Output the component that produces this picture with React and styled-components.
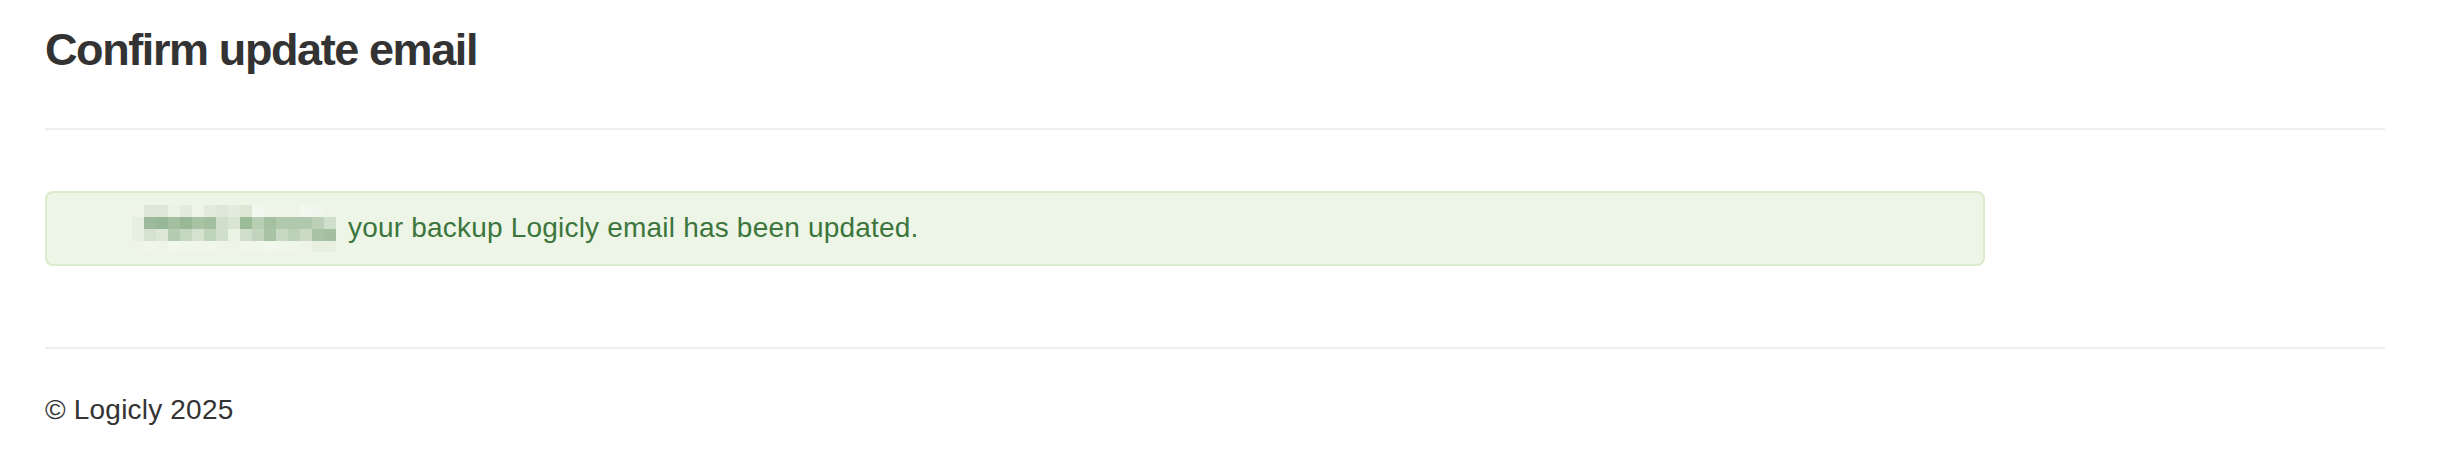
import React from 'react';
import styled, { createGlobalStyle } from 'styled-components';

const mosaic = [
  ['#eef4e8', '#dde8d8', '#dde8d8', '#eaf2e4', '#e2ecdc', '#eef5e8', '#e2ebdc', '#dde8d8', '#e2ecdc', '#dce7d6', '#f2f8ee', '#eef5e8', '#eef5e8', '#eef5e8', '#f2f8ee', '#f0f6ec', '#eef4e8'],
  ['#e6efe0', '#9dbb9c', '#98b797', '#a3bfa0', '#98b795', '#a8c3a4', '#a3bfa0', '#d0dfcb', '#d8e5d2', '#9cbb99', '#b8ceb3', '#a4c0a1', '#b0c8ac', '#b0c8ac', '#b0c8ac', '#bcd0b8', '#d0dfcb'],
  ['#e6efe0', '#d5e2cf', '#dce7d6', '#b5cbb1', '#c5d7c0', '#d5e2cf', '#bfd2ba', '#d0dfcb', '#eaf2e4', '#d0dfcb', '#c2d4bd', '#a8c3a4', '#c8d9c3', '#bdd0b8', '#cadac4', '#a8c3a4', '#a3bfa0'],
  ['#eef4e8', '#f0f6ec', '#eef4e8', '#f2f8ee', '#f0f6ec', '#f0f6ec', '#f0f6ec', '#eef4e8', '#eef4e8', '#f0f6ec', '#f0f6ec', '#f2f8ee', '#f0f6ec', '#f0f6ec', '#eef4e8', '#e6efe0', '#e6efe0'],
];

function App() {
  return (
    <Page>
      <GlobalStyle />
      <Title>Confirm update email</Title>
      <Rule $top={51} />
      <Alert>
        <Message>
          <Mosaic>
            {mosaic.flat().map((c, i) => (
              <Cell key={i} $color={c} />
            ))}
          </Mosaic>
          <span>your backup Logicly email has been updated.</span>
        </Message>
      </Alert>
      <Rule $top={81} />
      <Footer>© Logicly 2025</Footer>
    </Page>
  );
}

const GlobalStyle = createGlobalStyle`
  html, body {
    margin: 0;
    background: #ffffff;
  }
  body {
    font-family: "Liberation Sans", Arial, sans-serif;
    font-size: 28px;
    line-height: 40px;
    letter-spacing: 0.2px;
    color: #333333;
  }
`;

const Page = styled.div`
  width: 2340px;
  padding: 24px 0 0 45px;
`;

const Title = styled.h3`
  margin: 0;
  font-size: 45px;
  line-height: 52.8px;
  font-weight: 700;
  letter-spacing: -1.4px;
  color: #333333;
`;

const Rule = styled.hr`
  height: 0;
  border: 0;
  border-top: 2px solid #eeeeee;
  margin: ${(p) => p.$top}px 0 0;
`;

const Alert = styled.div`
  width: calc((100% + 60px) * 10 / 12 - 60px);
  box-sizing: border-box;
  margin-top: 61px;
  padding: 15.5px 30px;
  background: #edf5e6;
  border: 2px solid #d9ebcb;
  border-radius: 8px;
  color: #3c763d;
`;

const Message = styled.div`
  display: flex;
  align-items: center;
  gap: 12px;
  height: 40px;
  padding-left: 55px;
`;

const Mosaic = styled.div`
  display: grid;
  grid-template-columns: repeat(17, 12px);
  grid-auto-rows: 12px;
  height: 47px;
  overflow: hidden;
  margin: -3.5px 0;
  flex-shrink: 0;
`;

const Cell = styled.div`
  background: ${(p) => p.$color};
`;

const Footer = styled.p`
  margin: 41px 0 0;
  color: #333333;
`;

export default App;
